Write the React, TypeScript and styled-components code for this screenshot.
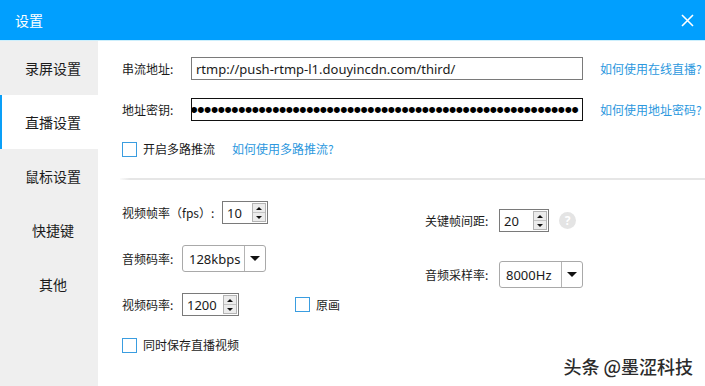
import * as React from "react";
import styled, { createGlobalStyle } from "styled-components";

const GlobalStyle = createGlobalStyle`
  html, body {
    margin: 0;
    padding: 0;
    background: #ffffff;
  }
  * {
    box-sizing: border-box;
  }
`;

const cjk = `"Noto Sans CJK SC", "Noto Sans", sans-serif`;
const latin = `"Noto Sans", "Noto Sans CJK SC", sans-serif`;

const SWindow = styled.div`
  position: relative;
  width: 705px;
  height: 386px;
  display: flex;
  flex-direction: column;
  overflow: hidden;
  font-family: ${cjk};
  color: #1a1a1a;
`;

const STitleBar = styled.div`
  height: 41px;
  flex: none;
  display: flex;
  align-items: center;
  justify-content: space-between;
  padding: 0 6px 0 15px;
  background: #019ffe;
  border-bottom: 1px solid #cdeffc;
  color: #ffffff;
  font-size: 14px;
`;

const SClose = styled.button`
  width: 24px;
  height: 24px;
  padding: 0;
  border: none;
  background: transparent;
  display: flex;
  align-items: center;
  justify-content: center;
`;

const SBody = styled.div`
  flex: 1;
  display: flex;
`;

const SSidebar = styled.div`
  width: 98px;
  flex: none;
  background: #efefef;
  display: flex;
  flex-direction: column;
`;

const SNavItem = styled.div<{ $active?: boolean }>`
  height: 54px;
  display: flex;
  align-items: center;
  justify-content: center;
  padding-left: 6px;
  font-size: 14px;
  color: #1c1c1c;
  background: ${(p) => (p.$active ? "#ffffff" : "transparent")};
  border-left: 2px solid ${(p) => (p.$active ? "#0a9ff7" : "transparent")};
`;

const SContent = styled.div`
  flex: 1;
  display: flex;
  flex-direction: column;
  padding-left: 24px;
`;

const STop = styled.div`
  display: flex;
  flex-direction: column;
  padding-top: 16px;
  padding-bottom: 21px;
  gap: 18px;
`;

const SRow = styled.div<{ $mt?: number }>`
  display: flex;
  align-items: center;
  margin-top: ${(p) => p.$mt ?? 0}px;
`;

const SLabel = styled.span<{ $w?: number }>`
  font-size: 12px;
  line-height: 16px;
  white-space: nowrap;
  width: ${(p) => (p.$w ? `${p.$w}px` : "auto")};
  flex: none;
`;

const STextField = styled.div<{ $focused?: boolean }>`
  width: 392px;
  height: 23px;
  border: 1px solid ${(p) => (p.$focused ? "#111111" : "#7a7a7a")};
  display: flex;
  align-items: center;
  justify-content: flex-end;
  overflow: hidden;
  white-space: nowrap;
  font-family: ${latin};
  font-size: 13px;
  padding: 0 4px;
`;

const SUrl = styled.span`
  margin-right: auto;
`;

const SDots = styled.span`
  flex: none;
  font-family: "Liberation Sans", sans-serif;
  font-size: 22px;
  line-height: 20px;
  letter-spacing: -0.9px;
  color: #000000;
`;

const SLink = styled.a<{ $ml: number }>`
  margin-left: ${(p) => p.$ml}px;
  font-size: 12px;
  line-height: 16px;
  color: #2c98de;
  text-decoration: none;
  white-space: nowrap;
`;

const SCheckRow = styled.label<{ $ml?: number }>`
  display: flex;
  align-items: center;
  gap: 6px;
  margin-left: ${(p) => p.$ml ?? 0}px;
  font-size: 12px;
  line-height: 16px;
`;

const SCheckBox = styled.span`
  width: 15px;
  height: 15px;
  flex: none;
  border: 1px solid #3a9de0;
  background: #ffffff;
`;

const SDivider = styled.div`
  height: 2px;
  margin-left: -2px;
  background: linear-gradient(90deg, #fbfbfb 0px, #e6e6e6 10px, #e6e6e6 100%);
`;

const SLower = styled.div`
  display: flex;
`;

const SColumn = styled.div<{ $w?: number; $pt: number; $gap: number }>`
  width: ${(p) => (p.$w ? `${p.$w}px` : "auto")};
  display: flex;
  flex-direction: column;
  padding-top: ${(p) => p.$pt}px;
  gap: ${(p) => p.$gap}px;
`;

const SSpin = styled.div<{ $w: number }>`
  width: ${(p) => p.$w}px;
  height: 23px;
  border: 1px solid #7a7a7a;
  display: flex;
  align-items: stretch;
  padding: 1px;
  font-family: ${latin};
  font-size: 13px;
`;

const SSpinValue = styled.span`
  flex: 1;
  display: flex;
  align-items: center;
  padding-left: 3px;
`;

const SSpinButtons = styled.div`
  width: 14px;
  display: flex;
  flex-direction: column;
  border: 1px solid #b4b4b4;
  background: #ececec;
`;

const SSpinHalf = styled.div<{ $down?: boolean }>`
  flex: 1;
  display: flex;
  align-items: center;
  justify-content: center;
  border-top: ${(p) => (p.$down ? "1px solid #c4c4c4" : "none")};
`;

const STriangle = styled.span<{ $down?: boolean; $size: number }>`
  width: 0;
  height: 0;
  border-left: ${(p) => p.$size}px solid transparent;
  border-right: ${(p) => p.$size}px solid transparent;
  ${(p) =>
    p.$down
      ? `border-top: ${p.$size}px solid #111;`
      : `border-bottom: ${p.$size}px solid #111;`}
`;

const SSelect = styled.div`
  width: 84px;
  height: 27px;
  border: 1px solid #a9a9a9;
  border-radius: 3px;
  display: flex;
  font-family: ${latin};
  font-size: 13px;
`;

const SSelectValue = styled.span`
  flex: 1;
  display: flex;
  align-items: center;
  padding-left: 6px;
  border-right: 1px solid #b4b4b4;
`;

const SSelectArrow = styled.span`
  width: 20px;
  display: flex;
  align-items: center;
  justify-content: center;
`;

const SHelp = styled.span`
  width: 17px;
  height: 17px;
  margin-left: 10px;
  border-radius: 50%;
  background: #e4e4e4;
  color: #ffffff;
  font-family: ${latin};
  font-weight: bold;
  font-size: 12px;
  display: flex;
  align-items: center;
  justify-content: center;
`;

const SWatermark = styled.div`
  position: absolute;
  right: 12px;
  bottom: 9px;
  font-family: ${cjk};
  font-size: 18px;
  line-height: 22px;
  font-weight: 500;
  color: #2b2b2b;
  text-shadow: 0 0 2px #ffffff, 0 0 3px #ffffff;
`;

const Spin = ({ value, width }: { value: string; width: number }) => (
  <SSpin $w={width}>
    <SSpinValue>{value}</SSpinValue>
    <SSpinButtons>
      <SSpinHalf>
        <STriangle $size={3} />
      </SSpinHalf>
      <SSpinHalf $down>
        <STriangle $size={3} $down />
      </SSpinHalf>
    </SSpinButtons>
  </SSpin>
);

const Select = ({ value }: { value: string }) => (
  <SSelect>
    <SSelectValue>{value}</SSelectValue>
    <SSelectArrow>
      <STriangle $size={5} $down />
    </SSelectArrow>
  </SSelect>
);

const navItems = ["录屏设置", "直播设置", "鼠标设置", "快捷键", "其他"];

const App = () => (
  <SWindow>
    <GlobalStyle />
    <STitleBar>
      <span>{`设置`}</span>
      <SClose aria-label="close">
        <svg width="13" height="13" viewBox="0 0 13 13">
          <path d="M1 1L12 12M12 1L1 12" stroke="#ffffff" strokeWidth="1.6" />
        </svg>
      </SClose>
    </STitleBar>
    <SBody>
      <SSidebar>
        {navItems.map((item, i) => (
          <SNavItem key={item} $active={i === 1}>
            {item}
          </SNavItem>
        ))}
      </SSidebar>
      <SContent>
        <STop>
          <SRow>
            <SLabel $w={69}>{`串流地址:`}</SLabel>
            <STextField>
              <SUrl>{`rtmp://push-rtmp-l1.douyincdn.com/third/`}</SUrl>
            </STextField>
            <SLink href="#" $ml={17}>{`如何使用在线直播?`}</SLink>
          </SRow>
          <SRow>
            <SLabel $w={69}>{`地址密钥:`}</SLabel>
            <STextField $focused>
              <SDots>{"•".repeat(57)}</SDots>
            </STextField>
            <SLink href="#" $ml={17}>{`如何使用地址密码?`}</SLink>
          </SRow>
          <SRow $mt={2}>
            <SCheckRow>
              <SCheckBox />
              {`开启多路推流`}
            </SCheckRow>
            <SLink href="#" $ml={17}>{`如何使用多路推流?`}</SLink>
          </SRow>
        </STop>
        <SDivider />
        <SLower>
          <SColumn $w={303} $pt={21} $gap={21}>
            <SRow>
              <SLabel $w={100}>{`视频帧率（fps）:`}</SLabel>
              <Spin value="10" width={46} />
            </SRow>
            <SRow>
              <SLabel $w={60}>{`音频码率:`}</SLabel>
              <Select value="128kbps" />
            </SRow>
            <SRow>
              <SLabel $w={60}>{`视频码率:`}</SLabel>
              <Spin value="1200" width={57} />
              <SCheckRow $ml={56}>
                <SCheckBox />
                {`原画`}
              </SCheckRow>
            </SRow>
            <SRow>
              <SCheckRow>
                <SCheckBox />
                {`同时保存直播视频`}
              </SCheckRow>
            </SRow>
          </SColumn>
          <SColumn $pt={29} $gap={29}>
            <SRow>
              <SLabel $w={74}>{`关键帧间距:`}</SLabel>
              <Spin value="20" width={50} />
              <SHelp>?</SHelp>
            </SRow>
            <SRow>
              <SLabel $w={74}>{`音频采样率:`}</SLabel>
              <Select value="8000Hz" />
            </SRow>
          </SColumn>
        </SLower>
      </SContent>
    </SBody>
    <SWatermark>{`头条 @墨涩科技`}</SWatermark>
  </SWindow>
);

export default App;
